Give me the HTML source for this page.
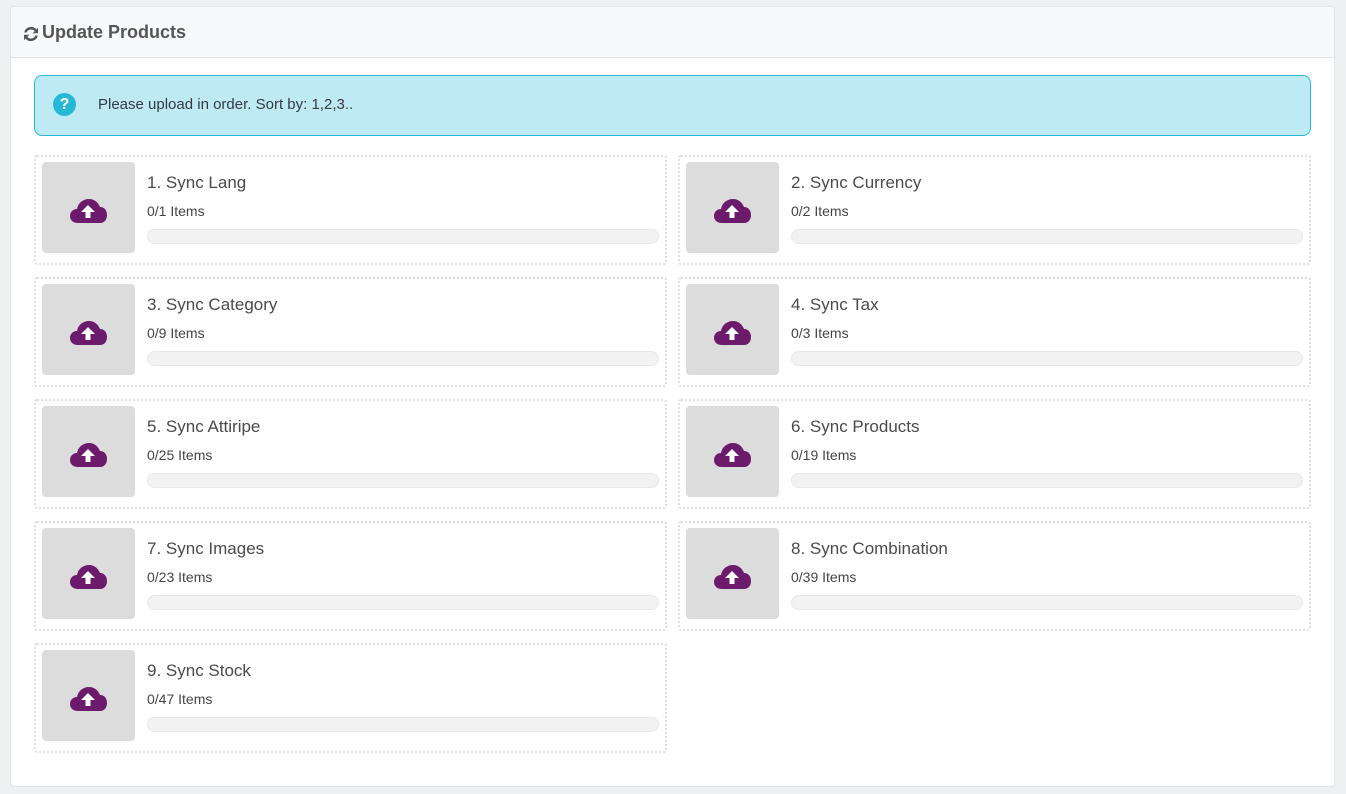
<!DOCTYPE html>
<html><head><meta charset="utf-8"><style>
*{box-sizing:border-box;margin:0;padding:0}
body{width:1346px;height:794px;background:#eef0f1;font-family:"Liberation Sans","DejaVu Sans",sans-serif;position:relative;overflow:hidden}
.panel{position:absolute;left:10px;top:6px;width:1325px;height:781px;background:#fff;border:1px solid #e1e6e8;border-radius:4px}
.hdr{height:51px;background:#f8f9fa;border-bottom:1px solid #dde3e5;border-radius:4px 4px 0 0;position:relative}
.hdr span{position:absolute;left:31px;top:15px;font-size:18px;font-weight:bold;color:#555}
.hdr svg{position:absolute;left:12px;top:19px}
.alert{position:absolute;left:23px;top:68px;width:1277px;height:61px;background:#bdeaf3;border:1px solid #25b9d7;border-radius:8px}
.alert .q{position:absolute;left:18px;top:17px;width:23px;height:23px;border-radius:50%;background:#25b9d7;color:#fff;font-weight:bold;font-size:16px;text-align:center;line-height:23px}
.alert .t{position:absolute;left:63px;top:20px;font-size:15px;color:#363a41}
.card{position:absolute;width:633px;height:110px;border:2px dotted #ddd;border-radius:3px}
.img{position:absolute;left:6px;top:5px;width:93px;height:91px;background:#dcdcdc;border-radius:4px}
.img svg{position:absolute;left:27px;top:36px}
.ti{position:absolute;left:111px;top:16px;font-size:17px;color:#4a4a4a}
.it{position:absolute;left:111px;top:46px;font-size:14px;color:#444}
.bar{position:absolute;left:111px;top:72px;width:512px;height:15px;background:#f2f2f2;border:1px solid #e8e8e8;border-radius:8px}
</style></head><body>
<div class="panel">
<div class="hdr"><svg width="16" height="16" viewBox="0 0 16 16"><path d="M13.5 3.5A7 7 0 0 0 1.2 6.5h2.4a4.8 4.8 0 0 1 8.1-1.4L9.5 7.3H15V1.8zM2.5 12.5A7 7 0 0 0 14.8 9.5h-2.4a4.8 4.8 0 0 1-8.1 1.4l2.2-2.2H1v5.5z" fill="#555"/></svg><span>Update Products</span></div>
<div class="alert"><div class="q">?</div><div class="t">Please upload in order. Sort by: 1,2,3..</div></div>
</div>
<div id="cards"></div>
<script>
var items=[["1. Sync Lang","0/1"],["2. Sync Currency","0/2"],["3. Sync Category","0/9"],["4. Sync Tax","0/3"],["5. Sync Attiripe","0/25"],["6. Sync Products","0/19"],["7. Sync Images","0/23"],["8. Sync Combination","0/39"],["9. Sync Stock","0/47"]];
var h="";
items.forEach(function(a,i){var x=i%2?678:34,y=155+Math.floor(i/2)*122;
h+='<div class="card" style="left:'+x+'px;top:'+y+'px"><div class="img"><svg width="38" height="26" viewBox="0 0 38 26"><path d="M9 25C4 25 1 22 1 18c0-4 3-7 7-7 1-6 6-10 12-10 5 0 9 3 11 8 4 0 7 3 7 8s-3 8-7 8z" fill="#6c1a6b"/><path d="M19 7l-7 7h4.5v6h5v-6H26z" fill="#fff"/></svg></div><div class="ti">'+a[0]+'</div><div class="it">'+a[1]+' Items</div><div class="bar"></div></div>';});
document.getElementById("cards").innerHTML=h;
</script>
</body></html>
